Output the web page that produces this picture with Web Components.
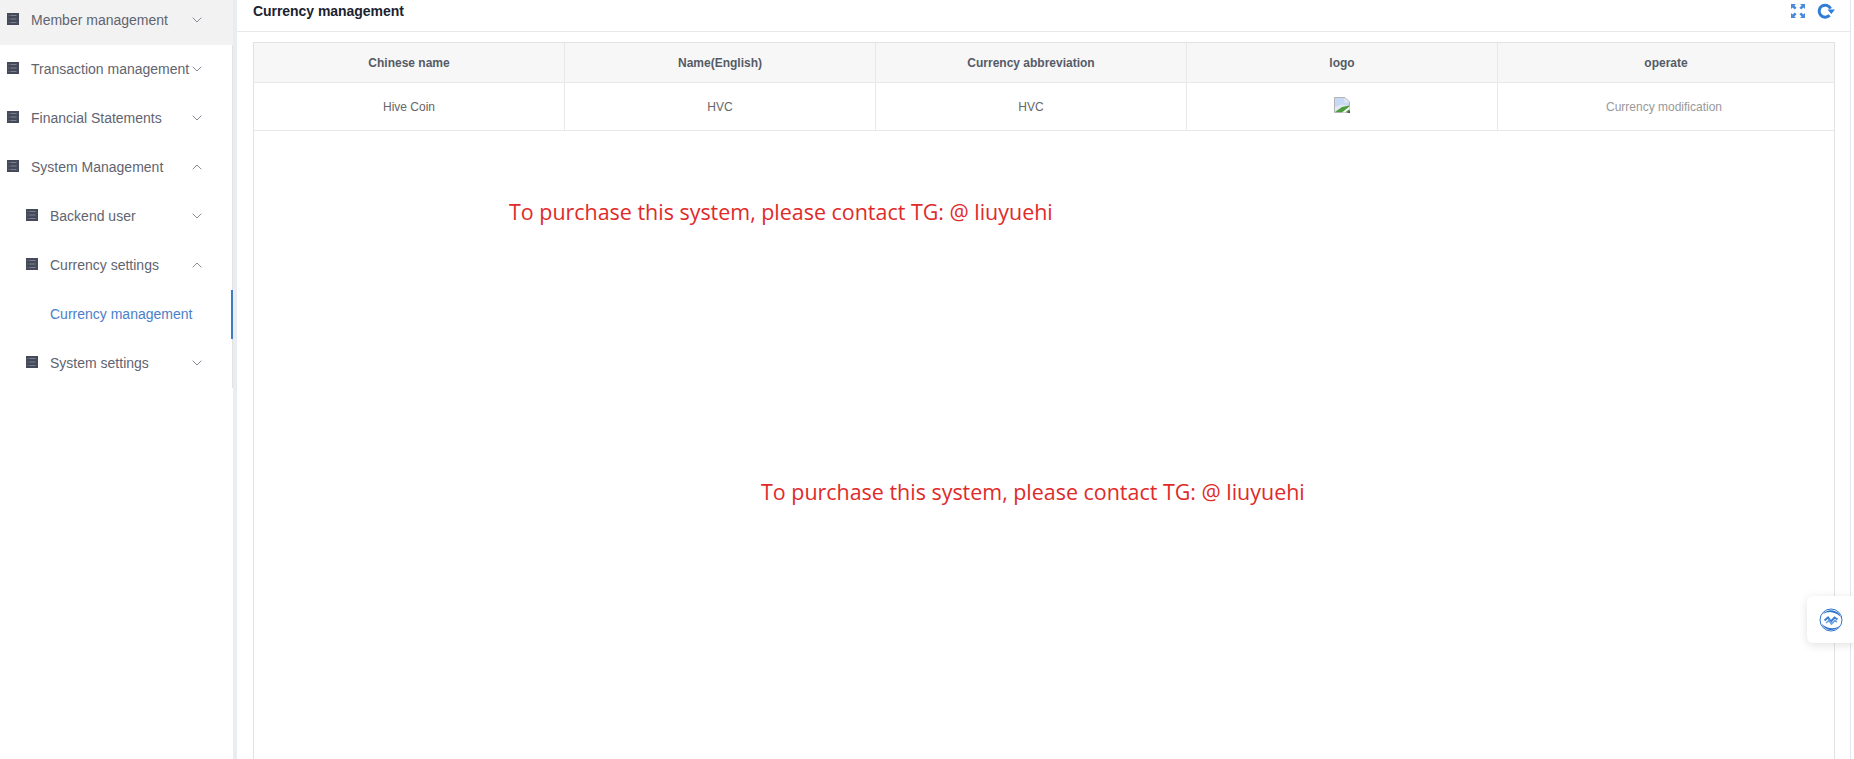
<!DOCTYPE html>
<html>
<head>
<meta charset="utf-8">
<title>Currency management</title>
<style>
    html, body { margin: 0; height: 100%; overflow: hidden; background: white; }
    body { font-family: 'Liberation Sans', Arial, sans-serif; }
</style>
</head>
<body>
<admin-page>
    <side-nav slot="nav">
        <nav-item label="Member management" hover></nav-item>
        <nav-item label="Transaction management"></nav-item>
        <nav-item label="Financial Statements"></nav-item>
        <nav-item label="System Management" open></nav-item>
        <nav-item label="Backend user" sub></nav-item>
        <nav-item label="Currency settings" sub open></nav-item>
        <nav-item label="Currency management" leaf active></nav-item>
        <nav-item label="System settings" sub></nav-item>
    </side-nav>
    <page-header title-text="Currency management"></page-header>
    <currency-table></currency-table>
    <promo-note style="left:509px;top:196px">To purchase this system, please contact TG: @ liuyuehi</promo-note>
    <promo-note style="left:761px;top:476px">To purchase this system, please contact TG: @ liuyuehi</promo-note>
    <float-widget></float-widget>
</admin-page>

<script>
class AdminPage extends HTMLElement {
    constructor() {
        super();
        this.attachShadow({ mode: 'open' });
        this.shadowRoot.innerHTML = `
            <style>
                :host { display: flex; height: 100vh; overflow: hidden; position: relative; }
                #nav { width: 233px; flex: none; }
                #gutter { width: 4px; flex: none; background: #e9edf2; }
                #main {
                    flex: 1;
                    min-width: 0;
                    margin-right: 4px;
                    box-shadow: 1px 0 0 #e4e7ec;
                    display: flex;
                    flex-direction: column;
                    background: white;
                }
            </style>
            <div id="nav"><slot name="nav"></slot></div>
            <div id="gutter"></div>
            <div id="main"><slot></slot></div>
        `;
    }
}

class SideNav extends HTMLElement {
    constructor() {
        super();
        this.attachShadow({ mode: 'open' });
        this.shadowRoot.innerHTML = `
            <style>
                :host { display: block; height: 100%; background: white; }
                #list {
                    margin-top: -4px;
                    display: flex;
                    flex-direction: column;
                    border-right: 1px solid #e2e2e2;
                    height: 392px;
                    box-sizing: border-box;
                }
            </style>
            <div id="list"><slot></slot></div>
        `;
    }
}

class NavItem extends HTMLElement {
    constructor() {
        super();
        this.attachShadow({ mode: 'open' });
        this.shadowRoot.innerHTML = `
            <style>
                :host {
                    display: flex;
                    align-items: center;
                    flex: none;
                    height: 49px;
                    width: 233px;
                    box-sizing: border-box;
                    padding-left: 7px;
                    position: relative;
                    color: #5f6470;
                    font: 14px/1 'Liberation Sans', Arial, sans-serif;
                }
                :host([sub]) { padding-left: 26px; }
                :host([leaf]) { padding-left: 50px; }
                :host([hover]) { background: #f2f2f2; }
                :host([active]) { color: #4a80c9; }
                :host([active])::after {
                    content: '';
                    position: absolute;
                    right: 0;
                    top: 0;
                    bottom: 0;
                    width: 2px;
                    background: #3f7cc0;
                }
                #icon { width: 12px; height: 12px; margin-right: 12px; margin-top: -3px; flex: none; }
                #label { white-space: nowrap; margin-top: -2px; }
                #arrow { position: absolute; left: 192px; top: 21px; width: 10px; height: 6px; }
            </style>
            <svg id="icon" viewBox="0 0 12 12">
                <rect width="12" height="12" fill="#444a5a"/>
                <path d="M1.5 2.5h.8M3.5 2.5h6M1.5 6h.8M3.5 6h6M1.5 9.5h.8M3.5 9.5h6" stroke="#8d919c" stroke-width="0.8"/>
            </svg>
            <span id="label"></span>
            <svg id="arrow" viewBox="0 0 10 6">
                <path fill="none" stroke="#7a7f8a" stroke-width="0.9" d="M0.7 0.7L5 5L9.3 0.7"/>
            </svg>
        `;
    }

    connectedCallback() {
        this.shadowRoot.getElementById('label').textContent = this.getAttribute('label') || '';
        let icon = this.shadowRoot.getElementById('icon');
        let arrow = this.shadowRoot.getElementById('arrow');
        if (this.hasAttribute('leaf')) {
            icon.remove();
            arrow.remove();
        } else if (this.hasAttribute('open')) {
            arrow.querySelector('path').setAttribute('d', 'M0.7 5.3L5 1L9.3 5.3');
        }
    }
}

class PageHeader extends HTMLElement {
    constructor() {
        super();
        this.attachShadow({ mode: 'open' });
        this.shadowRoot.innerHTML = `
            <style>
                :host {
                    display: flex;
                    align-items: center;
                    justify-content: space-between;
                    height: 32px;
                    flex: none;
                    box-sizing: border-box;
                    border-bottom: 1px solid #e8e8e8;
                    padding: 0 15px 10px 16px;
                }
                #title { font: bold 14px/1 'Liberation Sans', Arial, sans-serif; color: #1b2230; letter-spacing: -0.05px; }
                #tools { display: flex; align-items: center; gap: 12px; }
                svg { display: block; }
            </style>
            <span id="title"></span>
            <div id="tools">
                <svg width="14" height="14" viewBox="0 0 14 14" fill="#4a8ad8">
                    <path d="M0 0h5L3.4 1.6 5.6 3.8 3.8 5.6 1.6 3.4 0 5zM14 0v5L12.4 3.4 10.2 5.6 8.4 3.8 10.6 1.6 9 0zM0 14V9L1.6 10.6 3.8 8.4 5.6 10.2 3.4 12.4 5 14zM14 14H9L10.6 12.4 8.4 10.2 10.2 8.4 12.4 10.6 14 9z"/>
                </svg>
                <svg width="18" height="16" viewBox="0 0 18 16">
                    <path d="M12.6 12.2A6 6 0 1 1 13.6 5.6" fill="none" stroke="#2f7dd6" stroke-width="3"/>
                    <path d="M10.5 6.5h7.5l-3.7 4.5z" fill="#2f7dd6"/>
                </svg>
            </div>
        `;
    }

    connectedCallback() {
        this.shadowRoot.getElementById('title').textContent = this.getAttribute('title-text') || '';
    }
}

class CurrencyTable extends HTMLElement {
    constructor() {
        super();
        this.attachShadow({ mode: 'open' });
        this.shadowRoot.innerHTML = `
            <style>
                :host { display: block; flex: 1; min-height: 0; padding: 10px 15px 0 16px; }
                #box {
                    height: 100%;
                    box-sizing: border-box;
                    border: 1px solid #e2e2e2;
                    border-bottom: none;
                    font: 12px/1 'Liberation Sans', Arial, sans-serif;
                }
                .row {
                    display: grid;
                    grid-template-columns: 311px 311px 311px 311px 1fr;
                    border-bottom: 1px solid #e8e8e8;
                    color: #666;
                }
                .head { height: 39px; background: #f7f7f7; color: #555b66; font-weight: bold; }
                .body { height: 47px; }
                .cell {
                    display: flex;
                    align-items: center;
                    justify-content: center;
                    border-right: 1px solid #e8e8e8;
                }
                .cell:last-child { border-right: none; }
                .muted { color: #999; padding-right: 4px; }
                svg { display: block; margin-top: -4px; }
            </style>
            <div id="box">
                <div class="row head">
                    <div class="cell">Chinese name</div>
                    <div class="cell">Name(English)</div>
                    <div class="cell">Currency abbreviation</div>
                    <div class="cell">logo</div>
                    <div class="cell">operate</div>
                </div>
                <div class="row body">
                    <div class="cell">Hive Coin</div>
                    <div class="cell">HVC</div>
                    <div class="cell">HVC</div>
                    <div class="cell">
                        <svg width="16" height="16" viewBox="0 0 16 16">
                            <path d="M0.5 0.5H11L15.5 5V15.5H0.5z" fill="#e4e8f0" stroke="#b4b4b4"/>
                            <path d="M1 1H10.5V5.5H15V9L8 7.5 1 10z" fill="#c8d9f6"/>
                            <path d="M1 15L8 10 15 8.5V15z" fill="#4f9d42"/>
                            <path d="M8 15.5L15.5 9.5V12L11 15.5z" fill="#fff"/>
                            <path d="M13 16L16 13V16z" fill="#555"/>
                        </svg>
                    </div>
                    <div class="cell muted">Currency modification</div>
                </div>
            </div>
        `;
    }
}

class PromoNote extends HTMLElement {
    constructor() {
        super();
        this.attachShadow({ mode: 'open' });
        this.shadowRoot.innerHTML = `
            <style>
                :host {
                    position: absolute;
                    white-space: nowrap;
                    color: #e02a2a;
                    font: 21.45px/32px 'Open Sans', 'Noto Sans', sans-serif;
                }
            </style>
            <slot></slot>
        `;
    }
}

class FloatWidget extends HTMLElement {
    constructor() {
        super();
        this.attachShadow({ mode: 'open' });
        this.shadowRoot.innerHTML = `
            <style>
                :host {
                    position: absolute;
                    right: 0;
                    top: 596px;
                    width: 47px;
                    height: 47px;
                    background: white;
                    border-radius: 6px 0 0 6px;
                    box-shadow: 0 2px 10px rgba(0, 0, 0, 0.12);
                    display: flex;
                    align-items: center;
                    justify-content: center;
                }
                svg { display: block; margin-left: 1px; }
            </style>
            <svg width="24" height="24" viewBox="0 0 24 24">
                <circle cx="12" cy="12" r="11" fill="none" stroke="#2f74c9" stroke-width="1"/>
                <path d="M4 6A10.5 10.5 0 0 1 22 9.5 14 14 0 0 0 4 6z" fill="#2f74c9"/>
                <path d="M2.5 15.5A10.5 10.5 0 0 0 20.5 18 14 14 0 0 1 2.5 15.5z" fill="#2f74c9"/>
                <path d="M5.5 12.5L9 9.5 12 13.5 15.5 9.5 18.5 11.5" fill="none" stroke="#3b7fd4" stroke-width="2"/>
                <path d="M7 15L10 12.5 12.5 16 16 12.5 18 14" fill="none" stroke="#6a9fe0" stroke-width="1.6"/>
            </svg>
        `;
    }
}

customElements.define('admin-page', AdminPage);
customElements.define('side-nav', SideNav);
customElements.define('nav-item', NavItem);
customElements.define('page-header', PageHeader);
customElements.define('currency-table', CurrencyTable);
customElements.define('promo-note', PromoNote);
customElements.define('float-widget', FloatWidget);
</script>
</body>
</html>
